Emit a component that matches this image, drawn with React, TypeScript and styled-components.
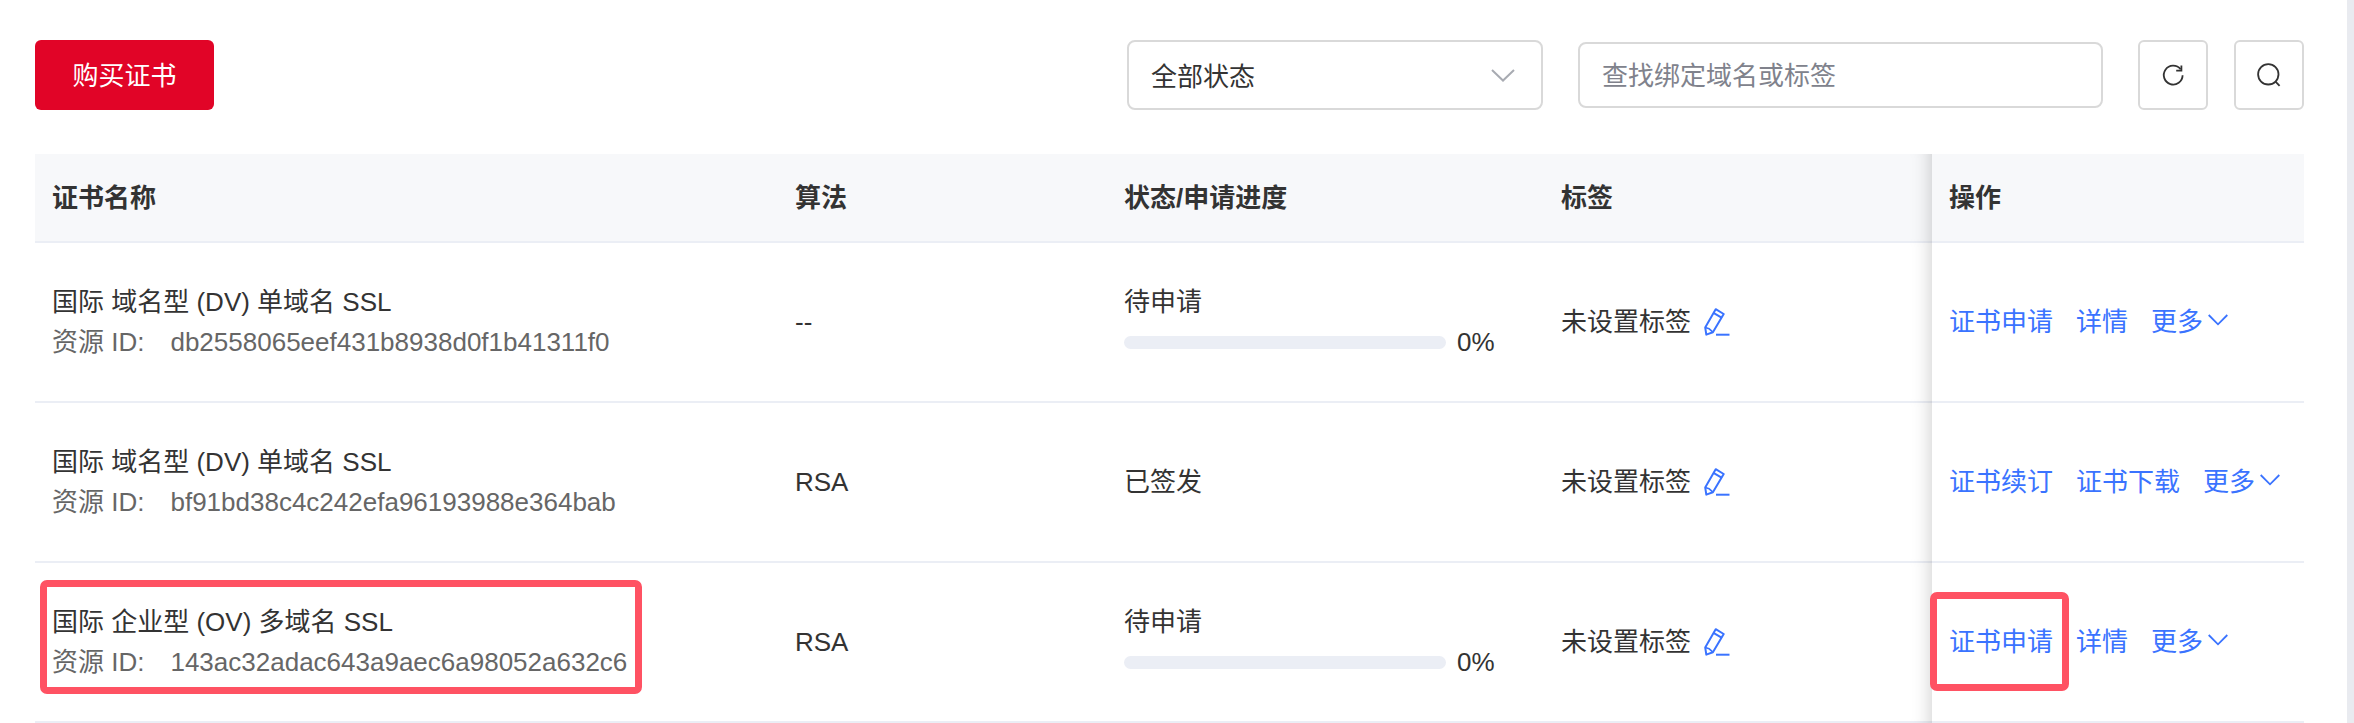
import React from 'react';
import styled, { createGlobalStyle, css } from 'styled-components';

const GlobalStyle = createGlobalStyle`
  *, *::before, *::after { box-sizing: border-box; }
  body {
    margin: 0;
    background: #e9ebf0;
    color: #333;
    font: 26px/40px "Liberation Sans", Arial, "Noto Sans CJK SC", sans-serif;
  }
  button, input, select { font: inherit; color: inherit; }
`;

const Panel = styled.main`
  min-height: 100vh;
  margin-right: 7px;
  padding: 40px 43px 0 35px;
  background: #fff;
`;

const Toolbar = styled.div`
  display: flex;
  align-items: center;
  justify-content: space-between;
  margin-bottom: 44px;
`;

const Filters = styled.form`
  display: flex;
  align-items: center;
  gap: 35px;
`;

const IconButtons = styled.div`
  display: flex;
  gap: 26px;
`;

const PrimaryButton = styled.button`
  min-width: 179px;
  height: 70px;
  padding: 2px 36px 0;
  border: 0;
  border-radius: 6px;
  background: #e10427;
  color: #fff;
  cursor: pointer;
`;

const field = css`
  border: 2px solid #d9d9d9;
  border-radius: 8px;
  background: #fff;
`;

const SelectBox = styled.div`
  display: grid;
  align-items: center;
  width: 416px;

  & > * { grid-area: 1 / 1; }
  & > svg {
    justify-self: end;
    margin-right: 28px;
    pointer-events: none;
  }
`;

const Select = styled.select`
  ${field}
  width: 100%;
  height: 70px;
  padding: 4px 64px 0 22px;
  appearance: none;
`;

const SearchInput = styled.input`
  ${field}
  width: 525px;
  height: 66px;
  padding: 2px 22px 0;

  &::placeholder { color: #80828c; opacity: 1; }
`;

const IconButton = styled.button`
  ${field}
  display: flex;
  align-items: center;
  justify-content: center;
  width: 70px;
  height: 70px;
  padding: 0;
  border-radius: 6px;
  cursor: pointer;
`;

const Table = styled.table`
  width: 100%;
  border-spacing: 0;
  table-layout: fixed;
`;

const Col = styled.col<{ $width?: number }>`
  width: ${({ $width }) => ($width ? `${$width}px` : 'auto')};
`;

const pinned = css`
  position: relative;

  &::before {
    content: "";
    position: absolute;
    top: 0;
    right: 100%;
    bottom: -2px;
    width: 22px;
    box-shadow: inset -20px 0 20px -20px rgba(0, 0, 0, 0.22);
    pointer-events: none;
  }
`;

const HeadCell = styled.th<{ $pinned?: boolean }>`
  height: 89px;
  padding: 0 17px;
  border-bottom: 2px solid #ebeef5;
  background: #f7f8fa;
  text-align: left;
  font-weight: 700;
  ${({ $pinned }) => $pinned && pinned}
`;

const Cell = styled.td<{ $pinned?: boolean }>`
  height: 160px;
  padding: 0 17px;
  border-bottom: 2px solid #ebeef5;
  ${({ $pinned }) => $pinned && pinned}
`;

const Marked = styled.div`
  position: relative;
  width: fit-content;
`;

const Highlight = styled.span<{ $inset: string }>`
  position: absolute;
  inset: ${({ $inset }) => $inset};
  border: 7px solid #ff5263;
  border-radius: 7px;
  pointer-events: none;
`;

const ResourceId = styled.div`
  display: flex;
  gap: 26px;
  color: #666;
`;

const Progress = styled.div`
  display: flex;
  align-items: center;
  gap: 11px;
`;

const Track = styled.div`
  width: 322px;
  height: 13px;
  overflow: hidden;
  border-radius: 7px;
  background: #ebeef5;
`;

const Fill = styled.div`
  height: 100%;
  background: #3a70ff;
`;

const TagLine = styled.div`
  display: flex;
  align-items: center;
  gap: 13px;
`;

const Actions = styled.div`
  display: flex;
  gap: 23px;
`;

const ActionLink = styled.a`
  color: #3a73ff;
  text-decoration: none;
`;

const TextButton = styled.button`
  display: flex;
  align-items: center;
  gap: 5px;
  padding: 0;
  border: 0;
  background: none;
  color: #3a73ff;
  cursor: pointer;
`;

const ChevronIcon = () => (
  <svg width="24" height="14" viewBox="0 0 24 14" fill="none" stroke="#a8abb2" strokeWidth="2" aria-hidden="true">
    <path d="M1 2l11 10.500L23 2" />
  </svg>
);

const MoreIcon = () => (
  <svg width="20" height="20" viewBox="0 0 20 20" fill="none" stroke="currentColor" strokeWidth="1.800" aria-hidden="true">
    <path d="M.7 3L10 12.300L19.300 3" />
  </svg>
);

const RefreshIcon = () => (
  <svg width="26" height="26" viewBox="0 0 26 26" fill="none" stroke="#333" strokeWidth="1.800" aria-hidden="true">
    <path d="M22.600 13.200A9.400 9.400 0 1 1 20.600 7.300" />
    <path d="M21.400 3.400V8.600H16.200" />
  </svg>
);

const SearchIcon = () => (
  <svg width="26" height="26" viewBox="0 0 26 26" fill="none" stroke="#333" strokeWidth="1.800" aria-hidden="true">
    <circle cx="12.300" cy="12.300" r="10.200" />
    <path d="M19.300 19.300L23.600 23.800" />
  </svg>
);

const EditIcon = () => (
  <svg width="26" height="28" viewBox="0 0 26 28" fill="none" stroke="currentColor" strokeWidth="2" strokeLinejoin="round" aria-hidden="true">
    <path d="M11.700 1.200L19.700 6L8.900 24.200L2.300 26.600L1.200 19.400Z" />
    <path d="M9.500 4.900L17.500 9.700" />
    <path d="M1.200 19.400L5.200 20.800L8.900 24.200" strokeWidth="1.600" />
    <path d="M12 26.700H25.500" />
  </svg>
);

interface Certificate {
  name: string;
  id: string;
  algorithm: string;
  status: string;
  progress?: number;
  actions: string[];
  highlighted?: boolean;
}

const certificates: Certificate[] = [
  {
    name: '国际 域名型 (DV) 单域名 SSL',
    id: 'db2558065eef431b8938d0f1b41311f0',
    algorithm: '--',
    status: '待申请',
    progress: 0,
    actions: ['证书申请', '详情'],
  },
  {
    name: '国际 域名型 (DV) 单域名 SSL',
    id: 'bf91bd38c4c242efa96193988e364bab',
    algorithm: 'RSA',
    status: '已签发',
    actions: ['证书续订', '证书下载'],
  },
  {
    name: '国际 企业型 (OV) 多域名 SSL',
    id: '143ac32adac643a9aec6a98052a632c6',
    algorithm: 'RSA',
    status: '待申请',
    progress: 0,
    actions: ['证书申请', '详情'],
    highlighted: true,
  },
];

const CertificateRow = ({ cert }: { cert: Certificate }) => (
  <tr>
    <Cell>
      <Marked>
        <div>{cert.name}</div>
        <ResourceId>
          <span>资源 ID:</span>
          <span>{cert.id}</span>
        </ResourceId>
        {cert.highlighted && <Highlight $inset="-22px -15px -12px -12px" />}
      </Marked>
    </Cell>
    <Cell>{cert.algorithm}</Cell>
    <Cell>
      <div>{cert.status}</div>
      {cert.progress !== undefined && (
        <Progress>
          <Track role="progressbar" aria-label={cert.status} aria-valuenow={cert.progress}>
            <Fill style={{ width: `${cert.progress}%` }} />
          </Track>
          <span>{cert.progress}%</span>
        </Progress>
      )}
    </Cell>
    <Cell>
      <TagLine>
        <span>未设置标签</span>
        <TextButton type="button" aria-label="编辑标签">
          <EditIcon />
        </TextButton>
      </TagLine>
    </Cell>
    <Cell $pinned>
      <Actions>
        {cert.actions.map((action, index) => (
          <Marked key={action}>
            <ActionLink href="#">{action}</ActionLink>
            {cert.highlighted && index === 0 && <Highlight $inset="-30px -16px -29px -19px" />}
          </Marked>
        ))}
        <TextButton type="button">
          更多
          <MoreIcon />
        </TextButton>
      </Actions>
    </Cell>
  </tr>
);

export default function App() {
  return (
    <>
      <GlobalStyle />
      <Panel>
        <Toolbar>
          <PrimaryButton type="button">购买证书</PrimaryButton>
          <Filters onSubmit={(event) => event.preventDefault()}>
            <SelectBox>
              <Select aria-label="状态">
                <option>全部状态</option>
                <option>待申请</option>
                <option>已签发</option>
              </Select>
              <ChevronIcon />
            </SelectBox>
            <SearchInput type="text" aria-label="查找绑定域名或标签" placeholder="查找绑定域名或标签" />
            <IconButtons>
              <IconButton type="button" aria-label="刷新">
                <RefreshIcon />
              </IconButton>
              <IconButton type="submit" aria-label="搜索">
                <SearchIcon />
              </IconButton>
            </IconButtons>
          </Filters>
        </Toolbar>
        <Table>
          <colgroup>
            <Col />
            <Col $width={329} />
            <Col $width={437} />
            <Col $width={388} />
            <Col $width={372} />
          </colgroup>
          <thead>
            <tr>
              <HeadCell>证书名称</HeadCell>
              <HeadCell>算法</HeadCell>
              <HeadCell>状态/申请进度</HeadCell>
              <HeadCell>标签</HeadCell>
              <HeadCell $pinned>操作</HeadCell>
            </tr>
          </thead>
          <tbody>
            {certificates.map((cert) => (
              <CertificateRow key={cert.id} cert={cert} />
            ))}
          </tbody>
        </Table>
      </Panel>
    </>
  );
}
